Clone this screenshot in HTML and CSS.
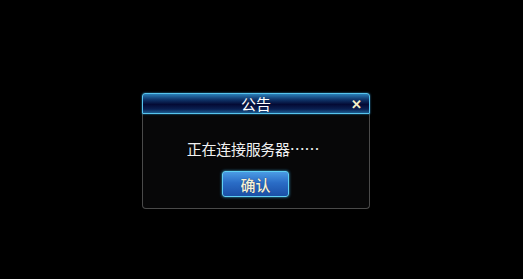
FILE: index.html
```html
<!DOCTYPE html>
<html lang="zh-CN">
  <head>
    <meta charset="UTF-8" />
    <meta name="viewport" content="width=device-width, initial-scale=1.0" />
    <title>公告</title>
    <link rel="stylesheet" href="styles.css">
  </head>
  <body>
    <div class="stage">
      <div class="dialog">
        <div class="dialog-title">
          <span class="title-text">公告</span>
          <span class="close-btn">✕</span>
        </div>
        <div class="dialog-body">
          <p class="message">正在连接服务器……</p>
          <button class="ok-btn">确认</button>
        </div>
      </div>
    </div>
  </body>
</html>
```

FILE: styles.css
```css
html, body {
  margin: 0;
  height: 100%;
  background: #000;
}
body {
  font-family: "Noto Sans CJK SC", "Liberation Sans", sans-serif;
  color: #fff;
}
.stage {
  padding: 93px 0 0 142px;
}
.dialog {
  width: 228px;
}
.dialog-title {
  position: relative;
  box-sizing: border-box;
  height: 21px;
  border: 1px solid #56c4ee;
  border-radius: 3px 3px 0 0;
  background: linear-gradient(to bottom, #2b7fb8 0%, #10386e 28%, #040a34 55%, #0a2052 80%, #1c5c90 100%);
  box-shadow: 0 0 2px #2d8fc6;
  display: flex;
  align-items: center;
  justify-content: center;
}
.title-text {
  font-size: 15px;
  line-height: 19px;
  color: #fff;
}
.close-btn {
  position: absolute;
  right: 7px;
  top: 1px;
  font-size: 13px;
  line-height: 17px;
  font-weight: bold;
  color: #f4f0c8;
}
.dialog-body {
  box-sizing: border-box;
  height: 95px;
  border: 1px solid #4a4a4a;
  border-top: none;
  border-radius: 0 0 4px 4px;
  background: #070708;
  display: flex;
  flex-direction: column;
  align-items: center;
  padding-top: 26px;
}
.message {
  margin: 0;
  font-size: 15px;
  line-height: 18px;
  letter-spacing: -0.3px;
  color: #f2f2f2;
  padding-right: 6px;
}
.ok-btn {
  margin-top: 13px;
  margin-right: 1px;
  width: 67px;
  height: 26px;
  padding: 0;
  border: 1px solid #5fd0f4;
  border-radius: 3px;
  background: linear-gradient(to bottom, #4b9be4 0%, #2a6cc6 45%, #1b4fa6 100%);
  box-shadow: 0 0 3px #3aa6e0;
  font-family: "Noto Sans CJK SC", "Liberation Sans", sans-serif;
  font-size: 15px;
  font-weight: 500;
  color: #f6f2d8;
  text-shadow: 0 0 1px #0a2050;
}
```
